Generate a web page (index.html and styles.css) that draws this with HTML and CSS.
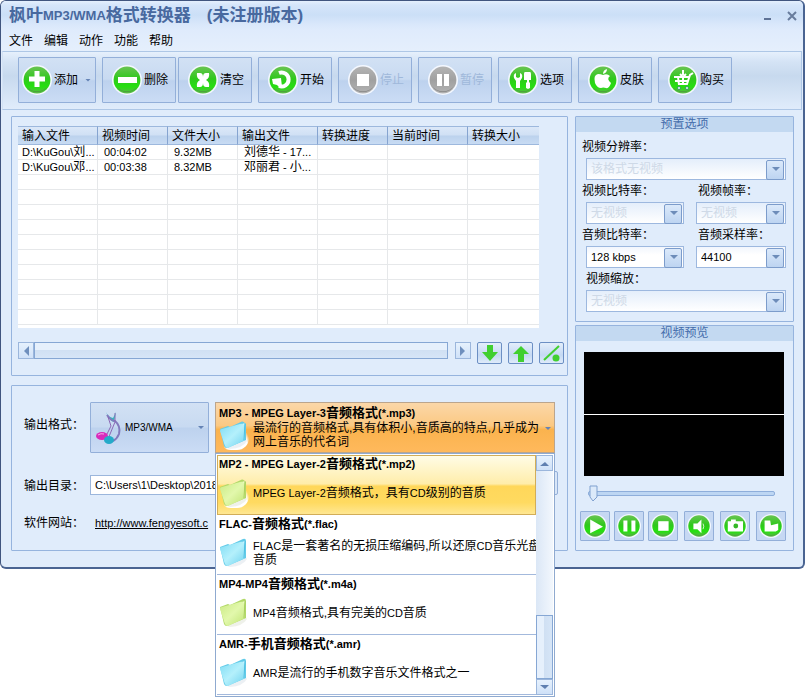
FILE: index.html
```
<!DOCTYPE html>
<html lang="zh-CN">
<head>
	<meta charset="UTF-8">
	<title>枫叶MP3/WMA格式转换器</title>
	<link rel="stylesheet" href="styles.css">
</head>
<body>

	<!-- 图标 -->
	<svg class="sprite" aria-hidden="true">
		<defs>
			<linearGradient id="green" x1="0" y1="0" x2="0" y2="1">
				<stop offset="0" stop-color="#69c452"/>
				<stop offset="0.45" stop-color="#2fc81c"/>
				<stop offset="0.75" stop-color="#25e010"/>
				<stop offset="1" stop-color="#5fb54c"/>
			</linearGradient>
			<linearGradient id="gray" x1="0" y1="0" x2="0" y2="1">
				<stop offset="0" stop-color="#b4b4b4"/>
				<stop offset="0.5" stop-color="#a0a0a0"/>
				<stop offset="1" stop-color="#b2b2b2"/>
			</linearGradient>
			<linearGradient id="blueFolder" x1="0" y1="0" x2="1" y2="1">
				<stop offset="0" stop-color="#7fdcf3"/>
				<stop offset="0.5" stop-color="#b4f0fc"/>
				<stop offset="1" stop-color="#6fd2ee"/>
			</linearGradient>
			<linearGradient id="greenFolder" x1="0" y1="0" x2="1" y2="1">
				<stop offset="0" stop-color="#cbea85"/>
				<stop offset="0.5" stop-color="#e2f8ac"/>
				<stop offset="1" stop-color="#bfe474"/>
			</linearGradient>
		</defs>
		<symbol id="ball" viewBox="0 0 30 30">
			<circle cx="15" cy="15" r="15" fill="#f4f8ff"/>
			<circle cx="15" cy="15" r="13.4" fill="url(#green)"/>
			<path d="M4 21a13 13 0 0 0 22 0a14 14 0 0 1-22 0z" fill="#4c9a3e"/>
		</symbol>
		<symbol id="ball-off" viewBox="0 0 30 30">
			<circle cx="15" cy="15" r="15" fill="#f4f8ff"/>
			<circle cx="15" cy="15" r="13.4" fill="url(#gray)"/>
			<path d="M4 21a13 13 0 0 0 22 0a14 14 0 0 1-22 0z" fill="#858585"/>
		</symbol>
		<symbol id="folder-blue" viewBox="0 0 30 30">
			<path d="M5 27l20-10l3 4q-4 7-17 8z" fill="#dfe6ec" opacity="0.6"/>
			<path d="M1 9l8-3l2 1l13-6q3-1 3 2v17l-19 8q-2 0-3-2z" fill="#62cbe8"/>
			<path d="M3 11l23-8l-3 16l-14 8z" fill="#d9f8fe"/>
			<path d="M1 11q0-2 2-2l18-5q3-1 4 1l1 14q0 1-2 2l-15 7q-2 0-3-2z" fill="url(#blueFolder)"/>
			<path d="M26 3l-1 17" stroke="#4fc0e2" fill="none"/>
		</symbol>
		<symbol id="folder-green" viewBox="0 0 30 30">
			<path d="M5 27l20-10l3 4q-4 7-17 8z" fill="#e4e8dc" opacity="0.6"/>
			<path d="M1 9l8-3l2 1l13-6q3-1 3 2v17l-19 8q-2 0-3-2z" fill="#b2d968"/>
			<path d="M3 11l23-8l-3 16l-14 8z" fill="#f3fcd8"/>
			<path d="M1 11q0-2 2-2l18-5q3-1 4 1l1 14q0 1-2 2l-15 7q-2 0-3-2z" fill="url(#greenFolder)"/>
			<path d="M26 3l-1 17" stroke="#a9cf60" fill="none"/>
		</symbol>
	</svg>

	<div class="window">
		<header class="titlebar">
			<h1><span>枫叶</span><span class="en">MP3/WMA</span><span>格式转换器</span><span class="trial">(未注册版本)</span></h1>
			<div class="controls">
				<button type="button" aria-label="最小化"><svg width="10" height="10"><path d="M1 8h7" stroke="#5f7396" stroke-width="2"/></svg></button>
				<button type="button" aria-label="关闭"><svg width="10" height="10"><path d="M1 1l8 8M9 1l-8 8" stroke="#687c9d" stroke-width="2"/></svg></button>
			</div>
		</header>

		<nav class="menu">
			<a href="#">文件</a>
			<a href="#">编辑</a>
			<a href="#">动作</a>
			<a href="#">功能</a>
			<a href="#">帮助</a>
		</nav>

		<!-- 工具栏 -->
		<div class="toolbar">
			<button type="button" class="tool add">
				<svg viewBox="0 0 30 30"><use href="#ball"/><path d="M15 6v16M7 14h16" stroke="#fff" stroke-width="5"/></svg>添加<i class="caret"></i>
			</button>
			<div class="pair">
				<button type="button" class="tool">
					<svg viewBox="0 0 30 30"><use href="#ball"/><path d="M6 12h19v6h-19z" fill="#fff"/></svg>删除
				</button>
				<button type="button" class="tool">
					<svg viewBox="0 0 30 30"><use href="#ball"/><path d="M9 8h3q3 0 3 4q0-4 3-4h3q1 5-3 7q4 2 3 7h-3q-3 0-3-4q0 4-3 4h-3q-1-5 3-7q-4-2-3-7z" fill="#fff"/></svg>清空
				</button>
			</div>
			<button type="button" class="tool">
				<svg viewBox="0 0 30 30"><use href="#ball"/><path d="M11 8a7 7 0 1 1 0 13" stroke="#fff" stroke-width="4" fill="none"/><path d="M4 14l9-1l1 9l-3 0l-2-2l-4-1z" fill="#fff"/></svg>开始
			</button>
			<button type="button" class="tool" disabled>
				<svg viewBox="0 0 30 30"><use href="#ball-off"/><path d="M9 9h12v12h-12z" fill="#fff"/></svg>停止
			</button>
			<button type="button" class="tool" disabled>
				<svg viewBox="0 0 30 30"><use href="#ball-off"/><path d="M9 9h5v12h-5zM16 9h5v12h-5z" fill="#fff"/></svg>暂停
			</button>
			<button type="button" class="tool">
				<svg viewBox="0 0 30 30"><use href="#ball"/><path d="M8 8v4l2 1l2-1v-4q3 1 2 5l-2 3v7h-4v-7l-2-3q-1-4 2-5zM17 7h5q1 0 1 2v6h-2v2l1 1v5l-2 1l-2-1v-5l1-1v-2h-3v-6q0-2 1-2z" fill="#fff"/></svg>选项
			</button>
			<button type="button" class="tool">
				<svg viewBox="0 0 30 30"><use href="#ball"/><path d="M15 9q0-4 4-5q0 4-4 5zM15 10q4-2 7 1q-4 3 1 7q-2 6-5 5q-3-1-5 0q-4 0-6-5q-2-8 3-9q3 0 5 1z" fill="#fff"/></svg>皮肤
			</button>
			<button type="button" class="tool">
				<svg viewBox="0 0 30 30"><use href="#ball"/><path d="M25 8l-3 2l-3 9h-9M6 12h15M7 16h13M10 12l1 8M15 11v9M12 9l3 3l3-3M15 5v5" stroke="#fff" stroke-width="2" fill="none"/><circle cx="11" cy="23" r="1.500" fill="#fff" stroke="#396"/><circle cx="19" cy="23" r="1.500" fill="#fff" stroke="#396"/></svg>购买
			</button>
		</div>

		<div class="main">
			<div class="left">

				<!-- 文件列表 -->
				<section class="panel list">
					<div class="sheet">
						<table>
							<thead>
								<tr>
									<th class="wide">输入文件</th>
									<th>视频时间</th>
									<th>文件大小</th>
									<th class="wide">输出文件</th>
									<th>转换进度</th>
									<th class="wide">当前时间</th>
									<th class="last">转换大小</th>
								</tr>
							</thead>
							<tbody>
								<tr><td>D:\KuGou\<span class="cn">刘</span>...</td><td>00:04:02</td><td>9.32MB</td><td><span class="cn">刘德华</span> - 17...</td><td></td><td></td><td></td></tr>
								<tr><td>D:\KuGou\<span class="cn">邓</span>...</td><td>00:03:38</td><td>8.32MB</td><td><span class="cn">邓丽君</span> - <span class="cn">小</span>...</td><td></td><td></td><td></td></tr>
								<tr><td></td><td></td><td></td><td></td><td></td><td></td><td></td></tr>
								<tr><td></td><td></td><td></td><td></td><td></td><td></td><td></td></tr>
								<tr><td></td><td></td><td></td><td></td><td></td><td></td><td></td></tr>
								<tr><td></td><td></td><td></td><td></td><td></td><td></td><td></td></tr>
								<tr><td></td><td></td><td></td><td></td><td></td><td></td><td></td></tr>
								<tr><td></td><td></td><td></td><td></td><td></td><td></td><td></td></tr>
								<tr><td></td><td></td><td></td><td></td><td></td><td></td><td></td></tr>
								<tr><td></td><td></td><td></td><td></td><td></td><td></td><td></td></tr>
								<tr><td></td><td></td><td></td><td></td><td></td><td></td><td></td></tr>
								<tr><td></td><td></td><td></td><td></td><td></td><td></td><td></td></tr>
							</tbody>
						</table>
					</div>
					<div class="listbar">
						<div class="hscroll">
							<button type="button" aria-label="向左"><svg width="6" height="10"><path d="M6 0v10l-5-5z" fill="#6f8fbd"/></svg></button>
							<div class="thumb"></div>
							<button type="button" class="next" aria-label="向右"><svg width="6" height="10"><path d="M0 0v10l5-5z" fill="#6f8fbd"/></svg></button>
						</div>
						<button type="button" class="small" aria-label="下移"><svg width="18" height="18"><path d="M6 1h6v7h5l-8 9l-8-9h5z" fill="#41cf30"/></svg></button>
						<button type="button" class="small" aria-label="上移"><svg width="18" height="18"><path d="M6 18h6v-8h5l-8-8l-8 8h5z" fill="#41cf30"/></svg></button>
						<button type="button" class="small" aria-label="清理"><svg width="18" height="18"><path d="M1 16l15-14" stroke="#41cf30" stroke-width="2"/><circle cx="13" cy="14" r="3.500" fill="#41cf30"/></svg></button>
					</div>
				</section>

				<!-- 输出设置 -->
				<section class="panel output">
					<div class="row format">
						<span class="caption">输出格式：</span>
						<button type="button" class="kind">
							<svg width="28" height="34" viewBox="0 0 28 34">
								<path d="M11 1q2 5 7 6l3-6l-2 10q-5-1-8-10z" fill="#39b5bd"/>
								<path d="M12 4q4 6 8 6q6 5 4 13q-2 5-6 7" stroke="#8279bd" stroke-width="2" fill="none"/>
								<path d="M20 2v9l-7 17M13 6l3 9l-5 10" stroke="#8c68b5" stroke-width="1" fill="none"/>
								<ellipse cx="7" cy="25" rx="6" ry="4" fill="#d92bbb"/>
								<ellipse cx="14" cy="29" rx="5" ry="4" fill="#25aac9"/>
								<path d="M3 24q3-2 6-1" stroke="#f6a9e8" stroke-width="1" fill="none"/>
							</svg>
							<span class="narrow">MP3/WMA</span><i class="caret"></i>
						</button>

						<div class="combo">
							<button type="button" class="current" aria-haspopup="listbox" aria-expanded="true">
								<span class="name"><span class="en">MP3 - MPEG Layer-3</span>音频格式<span class="en">(*.mp3)</span></span>
								<span class="info">
									<svg class="folder glow"><use href="#folder-blue"/></svg>
									<span>最流行的音频格式,具有体积小,音质高的特点,几乎成为<br>网上音乐的代名词</span>
								</span>
								<i class="caret"></i>
							</button>
							<div class="drop">
								<ul role="listbox">
									<li class="on" role="option">
										<span class="name"><span class="en">MP2 - MPEG Layer-2</span>音频格式<span class="en">(*.mp2)</span></span>
										<span class="info"><svg class="folder glow"><use href="#folder-green"/></svg><span><span class="en">MPEG Layer-2</span>音频格式，具有<span class="en">CD</span>级别的音质</span></span>
									</li>
									<li role="option">
										<span class="name"><span class="en">FLAC-</span>音频格式<span class="en">(*.flac)</span></span>
										<span class="info"><svg class="folder"><use href="#folder-blue"/></svg><span><span class="en">FLAC</span>是一套著名的无损压缩编码,所以还原<span class="en">CD</span>音乐光盘<br>音质</span></span>
									</li>
									<li role="option">
										<span class="name"><span class="en">MP4-MP4</span>音频格式<span class="en">(*.m4a)</span></span>
										<span class="info"><svg class="folder"><use href="#folder-green"/></svg><span><span class="en">MP4</span>音频格式,具有完美的<span class="en">CD</span>音质</span></span>
									</li>
									<li role="option">
										<span class="name"><span class="en">AMR-</span>手机音频格式<span class="en">(*.amr)</span></span>
										<span class="info"><svg class="folder"><use href="#folder-blue"/></svg><span><span class="en">AMR</span>是流行的手机数字音乐文件格式之一</span></span>
									</li>
								</ul>
								<div class="vscroll">
									<button type="button" aria-label="向上"><svg width="9" height="5"><path d="M0 5h9l-4-4z" fill="#5f7fb0"/></svg></button>
									<div class="thumb"></div>
									<button type="button" aria-label="向下"><svg width="9" height="5"><path d="M0 0h9l-4 4z" fill="#5f7fb0"/></svg></button>
								</div>
							</div>
						</div>
					</div>

					<div class="row path">
						<label class="caption" for="dir">输出目录：</label>
						<input id="dir" type="text" value="C:\Users\1\Desktop\2018">
						<button type="button" class="browse" aria-label="浏览"></button>
					</div>

					<div class="row site">
						<span class="caption">软件网站：</span>
						<a href="#">http://www.fengyesoft.c</a>
					</div>
				</section>
			</div>

			<div class="right">
				<section class="panel">
					<h2>预置选项</h2>
					<div class="preset">
						<div class="field full">
							<label for="size">视频分辨率：</label>
							<div class="pick"><select id="size" disabled><option>该格式无视频</option></select></div>
						</div>
						<div class="field">
							<label for="vrate">视频比特率：</label>
							<div class="pick"><select id="vrate" disabled><option>无视频</option></select></div>
						</div>
						<div class="field side">
							<label for="fps">视频帧率：</label>
							<div class="pick"><select id="fps" disabled><option>无视频</option></select></div>
						</div>
						<div class="field">
							<label for="arate">音频比特率：</label>
							<div class="pick"><select id="arate"><option>128 kbps</option></select></div>
						</div>
						<div class="field side">
							<label for="hz">音频采样率：</label>
							<div class="pick"><select id="hz"><option>44100</option></select></div>
						</div>
						<div class="field full zoom">
							<label for="zoom">视频缩放：</label>
							<div class="pick"><select id="zoom" disabled><option>无视频</option></select></div>
						</div>
					</div>
				</section>

				<section class="panel">
					<h2>视频预览</h2>
					<div class="preview">
						<div class="screen"></div>
						<input type="range" min="0" max="100" value="0" aria-label="播放进度">
						<div class="player">
							<div class="trio">
								<button type="button" aria-label="播放"><svg viewBox="0 0 30 30"><use href="#ball"/><path d="M9 7l16 9l-16 8z" fill="#fff"/></svg></button>
								<button type="button" aria-label="暂停"><svg viewBox="0 0 30 30"><use href="#ball"/><path d="M8 8h5v14h-5zM18 8h5v14h-5z" fill="#fff"/></svg></button>
								<button type="button" aria-label="停止"><svg viewBox="0 0 30 30"><use href="#ball"/><path d="M9 9h13v12h-13z" fill="#fff"/></svg></button>
							</div>
							<button type="button" aria-label="音量"><svg viewBox="0 0 30 30"><use href="#ball"/><path d="M8 12h5l5-5v17l-5-5h-5z" fill="#fff"/><path d="M20 12q2 3 0 7" stroke="#fff" stroke-width="1" fill="none"/></svg></button>
							<button type="button" aria-label="截图"><svg viewBox="0 0 30 30"><use href="#ball"/><path d="M6 9h4v-2h6v2h9v13h-19z" fill="#fff"/><circle cx="16" cy="15" r="3" fill="#35b826"/></svg></button>
							<button type="button" aria-label="打开目录"><svg viewBox="0 0 30 30"><use href="#ball"/><path d="M7 8h7l1 6l9-2v8l-3 2h-14z" fill="#fff"/></svg></button>
						</div>
					</div>
				</section>
			</div>
		</div>
	</div>

</body>
</html>
```

FILE: styles.css
```
* {
	box-sizing: border-box;
}
body {
	min-height: 100vh;
	margin: 0;
	background-color: #fff;
	color: #000;
	font: 12px/14px "Liberation Sans", "Noto Sans CJK SC", sans-serif;
}
button, input, select {
	margin: 0;
	padding: 0;
	font: inherit;
	color: inherit;
}
h1, h2, ul {
	margin: 0;
	padding: 0;
}
svg {
	display: block;
	flex: none;
}
.sprite {
	position: absolute;
	width: 0;
	height: 0;
}
/*英文比中文小一号*/
.en {
	font-size: 11px;
}
.cn {
	font-size: 12px;
}
.caret {
	flex: none;
	width: 6px;
	height: 3px;
	background-color: #6583b5;
	clip-path: polygon(0 0, 100% 0, 50% 100%);
}

/*窗口*/
.window {
	border: 1px solid #40557f;
	border-bottom: 2px solid #4a6492;
	border-right: 2px solid #4a6492;
	border-radius: 6px;
	background-color: #e0ecfb;
}
.titlebar {
	display: flex;
	justify-content: space-between;
	height: 29px;
	padding: 0 6px 0 8px;
	border-radius: 5px 5px 0 0;
	background: linear-gradient(#e4effd 0, #d5e5fa 4px, #cbdff7 14px, #dae8fb 24px, #dfebfc 100%);
}
.titlebar h1 {
	display: flex;
	align-items: center;
	font-size: 17px;
	line-height: 28px;
	color: #48699f;
	white-space: nowrap;
}
.titlebar .en {
	font-size: 13px;
}
.titlebar .trial {
	margin-left: 16px;
}
.controls {
	display: flex;
	align-items: center;
	gap: 14px;
}
.controls button {
	border: 0;
	background: none;
}
.menu {
	display: flex;
	gap: 11px;
	height: 21px;
	padding: 4px 8px;
	background: linear-gradient(#dfebfc, #e5effc);
}
.menu a {
	color: #000;
	text-decoration: none;
}

/*工具栏*/
.toolbar {
	display: flex;
	gap: 6px;
	height: 59px;
	margin: 0 1px;
	padding: 5px 15px;
	border: 1px solid #aec7e6;
	border-left-color: #d3e2f5;
	background: linear-gradient(#e6f0fc 0, #d4e3f5 10px, #c7d9ee 24px, #d3e2f4 40px, #e0ecfb 100%);
}
.pair {
	display: flex;
	gap: 2px;
}
.tool, .kind {
	display: flex;
	align-items: center;
	border: 1px solid #93afd9;
	border-radius: 1px;
	background: linear-gradient(#d2e1f4 0, #c8daf1 48%, #bdd2ee 52%, #cbdcf5 100%);
}
.tool {
	gap: 2px;
	width: 74px;
	height: 46px;
	padding-left: 9px;
	white-space: nowrap;
}
.tool svg {
	width: 30px;
	height: 30px;
}
.tool:disabled {
	color: #9fb8da;
}
.add {
	width: 78px;
	padding-left: 3px;
}
.add .caret {
	margin-left: 5px;
}

/*左右两栏*/
.main {
	display: grid;
	grid-template-columns: minmax(0, 1fr) 219px;
	gap: 7px;
	padding: 6px 9px 16px 10px;
}
.left {
	display: flex;
	flex-direction: column;
	gap: 9px;
}
.right {
	display: flex;
	flex-direction: column;
	gap: 3px;
}
.panel {
	border: 1px solid #96b4de;
	border-radius: 1px;
}
.panel h2 {
	height: 15px;
	background-color: #c3d9f1;
	color: #446cab;
	font-size: 12px;
	font-weight: normal;
	line-height: 14px;
	text-align: center;
}

/*文件列表*/
.list {
	padding: 9px 3px 11px 6px;
}
.sheet {
	height: 202px;
	margin-right: 25px;
	background-color: #fff;
	overflow: hidden;
}
table {
	width: 100%;
	border-collapse: separate;
	border-spacing: 0;
	table-layout: fixed;
}
th {
	width: 70px;
	height: 19px;
	padding: 0 0 0 4px;
	border-top: 1px solid #9db8dd;
	border-bottom: 1px solid #9db8dd;
	border-right: 1px solid #86a4d0;
	background: linear-gradient(#dce8f8 0, #d0e0f4 48%, #bcd2ed 52%, #c8dbf3 100%);
	font-weight: normal;
	text-align: left;
}
th.wide {
	width: 80px;
}
th.last {
	width: auto;
	border-right: 0;
}
td {
	height: 15px;
	padding: 0 0 0 6px;
	border-right: 1px solid #e6e8ea;
	border-bottom: 1px solid #e6e8ea;
	font-size: 11px;
	line-height: 14px;
	white-space: nowrap;
}
td:first-child {
	padding-left: 4px;
}
td:last-child {
	border-right: 0;
}
.listbar {
	display: flex;
	gap: 6px;
	margin-top: 14px;
}
.hscroll {
	display: flex;
	flex: 1;
	height: 17px;
}
.hscroll button, .vscroll button {
	display: flex;
	align-items: center;
	justify-content: center;
	width: 16px;
	height: 17px;
	border: 1px solid #9bb6dc;
	background: linear-gradient(#e6f1fd, #cfe1f8);
}
.hscroll .next {
	margin-left: 7px;
}
.thumb {
	flex: 1;
	border: 1px solid #86a7d4;
	background: linear-gradient(#e6f0fc 45%, #d0e0f3 50%, #d6e5f7);
}
.small {
	display: flex;
	align-items: center;
	justify-content: center;
	width: 25px;
	height: 22px;
	border: 1px solid #6c8fc4;
	border-radius: 2px;
	background: linear-gradient(#e3eefb, #c5d9f3 60%, #dfebfa);
}

/*输出设置*/
.output {
	padding: 16px 12px 18px;
}
.row {
	display: flex;
	align-items: center;
}
.caption {
	flex: none;
	width: 66px;
}
.format .caption {
	padding-bottom: 6px;
}
.kind {
	width: 119px;
	height: 51px;
	margin-right: 6px;
	padding: 0 4px;
}
.narrow {
	flex: 1;
	margin-left: 2px;
	font-size: 10px;
	text-align: left;
}
.combo {
	position: relative;
	flex: 1;
	min-width: 0;
}
.current {
	display: block;
	position: relative;
	width: 100%;
	height: 51px;
	padding: 3px;
	border: 1px solid #bba58d;
	background: linear-gradient(#fbd7a8 0, #fbc983 46%, #fab34e 54%, #ffb95c 100%);
	text-align: left;
}
.current .caret {
	position: absolute;
	right: 3px;
	top: 24px;
}
.name {
	display: block;
	font-size: 13px;
	font-weight: bold;
	line-height: 14px;
	white-space: nowrap;
}
.info {
	display: flex;
	align-items: center;
	gap: 4px;
	white-space: nowrap;
}
.folder {
	width: 30px;
	height: 30px;
}
.glow {
	border-radius: 40%;
	background: radial-gradient(ellipse at 60% 85%, #fff 40%, transparent 52%);
}

/*弹出的格式列表*/
.drop {
	display: flex;
	position: absolute;
	z-index: 1;
	top: 100%;
	left: 0;
	right: 0;
	padding: 1px;
	border: 1px solid #8faad0;
	background-color: #fff;
}
.drop ul {
	flex: 1;
	min-width: 0;
	list-style: none;
}
.drop li {
	height: 60px;
	padding: 2px;
	border-bottom: 1px solid #a3b9dc;
}
.drop li .info {
	height: 43px;
}
.drop li.on {
	padding: 1px;
	border: 1px solid #d2ad58;
	background: linear-gradient(#fffce6 0, #ffedaa 48%, #ffd75a 52%, #ffda60 80%, #ffe792 100%);
}
.vscroll {
	display: flex;
	flex-direction: column;
	width: 17px;
	background: linear-gradient(90deg, #dbe7f6, #f2f7fd);
}
.vscroll button {
	width: 17px;
	height: 16px;
}
.vscroll .thumb {
	flex: none;
	height: 64px;
	margin-top: auto;
	background: linear-gradient(90deg, #e6f0fc 45%, #d0e0f3 50%, #d6e5f7);
}
.path {
	height: 24px;
	margin-top: 18px;
}
.path input {
	flex: 1;
	min-width: 0;
	height: 20px;
	margin-top: 4px;
	padding: 0 4px;
	border: 1px solid #9bb6dc;
	background-color: #fff;
	font-size: 11px;
}
.path .caption {
	margin-top: 6px;
}
.browse {
	width: 24px;
	height: 24px;
	margin-right: -3px;
	border: 1px solid #93afd9;
	border-radius: 2px;
	background-color: #d8e6f8;
}
.site {
	height: 18px;
	margin-top: 19px;
}
.site a {
	margin-left: 5px;
	color: #000;
	font-size: 11px;
}

/*预置选项*/
.preset {
	display: grid;
	grid-template-columns: minmax(0, 1fr) 94px;
	gap: 3px 8px;
	padding: 7px 7px 9px 6px;
}
.full {
	grid-column: 1 / 3;
}
.field label {
	display: block;
	height: 16px;
	margin-bottom: 3px;
	line-height: 16px;
	white-space: nowrap;
}
.side label {
	padding-left: 6px;
}
.zoom label {
	padding-left: 4px;
}
.pick {
	position: relative;
	height: 22px;
	margin-left: 4px;
}
.pick select {
	width: 100%;
	height: 22px;
	padding: 0 20px 0 4px;
	border: 1px solid #9db8df;
	border-radius: 0;
	background: linear-gradient(#f2f6fd, #fff 40%);
	font-size: 11px;
	appearance: none;
	opacity: 1;
}
.pick select:disabled {
	background: linear-gradient(#e4eefb, #fff);
	color: #ced9e7;
	font-size: 12px;
}
/*右侧小箭头*/
.pick::before {
	content: "";
	position: absolute;
	z-index: 1;
	top: 2px;
	right: 2px;
	width: 16px;
	height: 18px;
	border: 1px solid #7c9ccb;
	border-radius: 2px;
	background: linear-gradient(#dbe9fa, #bdd4f1);
	pointer-events: none;
}
.pick::after {
	content: "";
	position: absolute;
	z-index: 1;
	top: 9px;
	right: 6px;
	width: 8px;
	height: 4px;
	background-color: #6d8cb9;
	clip-path: polygon(0 0, 100% 0, 50% 100%);
	pointer-events: none;
}

/*视频预览*/
.preview {
	padding: 11px 7px 9px 4px;
}
.screen {
	display: flex;
	align-items: center;
	height: 124px;
	margin: 0 2px 0 4px;
	background-color: #000;
}
.screen::after {
	content: "";
	flex: 1;
	height: 1px;
	background-color: #fff;
}
.preview input {
	display: block;
	width: calc(100% - 19px);
	height: 16px;
	margin: 9px 11px 10px 8px;
	background: none;
	appearance: none;
}
.preview input::-webkit-slider-runnable-track {
	height: 5px;
	border: 1px solid #8eaedb;
	border-radius: 2px;
	background-color: #bdd6f3;
}
.preview input::-webkit-slider-thumb {
	width: 9px;
	height: 17px;
	margin-top: -7px;
	border: 0;
	background: url("data:image/svg+xml,%3Csvg xmlns='http://www.w3.org/2000/svg' width='9' height='17'%3E%3Cpath d='M1 1h7v11l-4 4l-3-4z' fill='%23dceafa' stroke='%237fa0cf'/%3E%3C/svg%3E") no-repeat;
	appearance: none;
}
.player {
	display: flex;
	justify-content: space-between;
}
.trio {
	display: flex;
	gap: 4px;
}
.player button {
	display: flex;
	align-items: center;
	justify-content: center;
	width: 30px;
	height: 30px;
	border: 1px solid #93afd9;
	border-radius: 1px;
	background-color: #c6d8f3;
}
.player svg {
	width: 24px;
	height: 24px;
}
```
